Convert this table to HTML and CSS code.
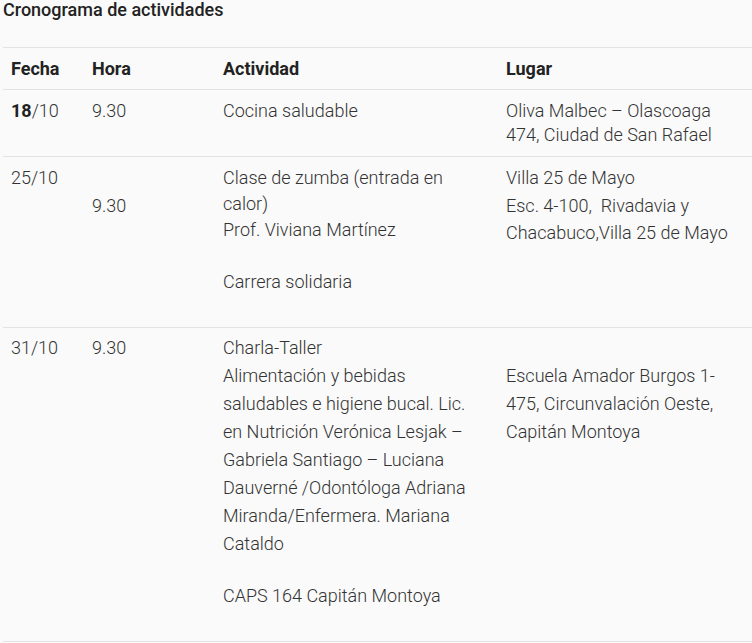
FILE: index.html
```html
<!DOCTYPE html>
<html lang="es">
<head>
<meta charset="utf-8">
<title>Cronograma de actividades</title>
<link rel="stylesheet" href="styles.css">
</head>
<body>
<div class="wrap">
  <h4 class="title">Cronograma de actividades</h4>
  <table class="sched">
    <colgroup>
      <col class="c-fecha"><col class="c-hora"><col class="c-act"><col class="c-lugar">
    </colgroup>
    <thead>
      <tr class="head">
        <th>Fecha</th><th>Hora</th><th>Actividad</th><th>Lugar</th>
      </tr>
    </thead>
    <tbody>
      <tr class="r1">
        <td><b>18</b>/10</td>
        <td>9.30</td>
        <td>Cocina saludable</td>
        <td>Oliva Malbec – Olascoaga<br>474, Ciudad de San Rafael</td>
      </tr>
      <tr class="r2">
        <td>25/10</td>
        <td class="h2"><br>9.30</td>
        <td class="a2">Clase de zumba (entrada en<br>calor)<br>Prof. Viviana Martínez<br><br>Carrera solidaria</td>
        <td class="l2">Villa 25 de Mayo<br>Esc. 4-100,&nbsp; Rivadavia y<br>Chacabuco,Villa 25 de Mayo</td>
      </tr>
      <tr class="r3">
        <td>31/10</td>
        <td>9.30</td>
        <td>
          <p class="p">Charla-Taller<br>Alimentación y bebidas<br>saludables e higiene bucal. Lic.<br>en Nutrición Verónica Lesjak –<br>Gabriela Santiago – Luciana<br>Dauverné /Odontóloga Adriana<br>Miranda/Enfermera. Mariana<br>Cataldo</p>
          <p class="p p-gap">CAPS 164 Capitán Montoya</p>
        </td>
        <td><br>Escuela Amador Burgos 1-<br>475, Circunvalación Oeste,<br>Capitán Montoya</td>
      </tr>
    </tbody>
  </table>
</div>
</body>
</html>
```

FILE: styles.css
```css
html, body {
  margin: 0;
  padding: 0;
  background: #fafafa;
  overflow: hidden;
}
body {
  font-family: Roboto, "Noto Sans", sans-serif;
  font-size: 18px;
  color: #333;
}
.wrap {
  padding-left: 3px;
}
.title {
  margin: 0;
  font-size: 18px;
  line-height: 20px;
  font-weight: 500;
  color: #222;
  padding-bottom: 27px;
}
.sched {
  width: 100%;
  table-layout: fixed;
  border-collapse: collapse;
  border-top: 1px solid #e3e3e3;
}
.c-fecha { width: 81px; }
.c-hora { width: 131px; }
.c-act { width: 283px; }
.c-lugar { width: auto; }
.sched th, .sched td {
  text-align: left;
  vertical-align: top;
  padding: 0 0 0 8px;
  white-space: nowrap;
  border-bottom: 1px solid #e3e3e3;
}
.sched th {
  font-weight: 700;
  color: #222;
  line-height: 24px;
  padding-top: 9px;
  padding-bottom: 8px;
}
.sched td {
  font-weight: 300;
}
.sched td b {
  font-weight: 700;
  color: #222;
}
.r1 td {
  line-height: 24px;
  padding-top: 9px;
  padding-bottom: 9px;
}
.r2 td {
  line-height: 26px;
  padding-top: 8px;
  padding-bottom: 32px;
}
.r2 td.h2 {
  line-height: 27px;
}
.r2 td.l2 {
  line-height: 27.5px;
  padding-top: 7px;
}
.r3 td {
  line-height: 28px;
  padding-top: 6px;
  padding-bottom: 31px;
}
.p {
  margin: 0;
}
.p-gap {
  margin-top: 24px;
}
```
